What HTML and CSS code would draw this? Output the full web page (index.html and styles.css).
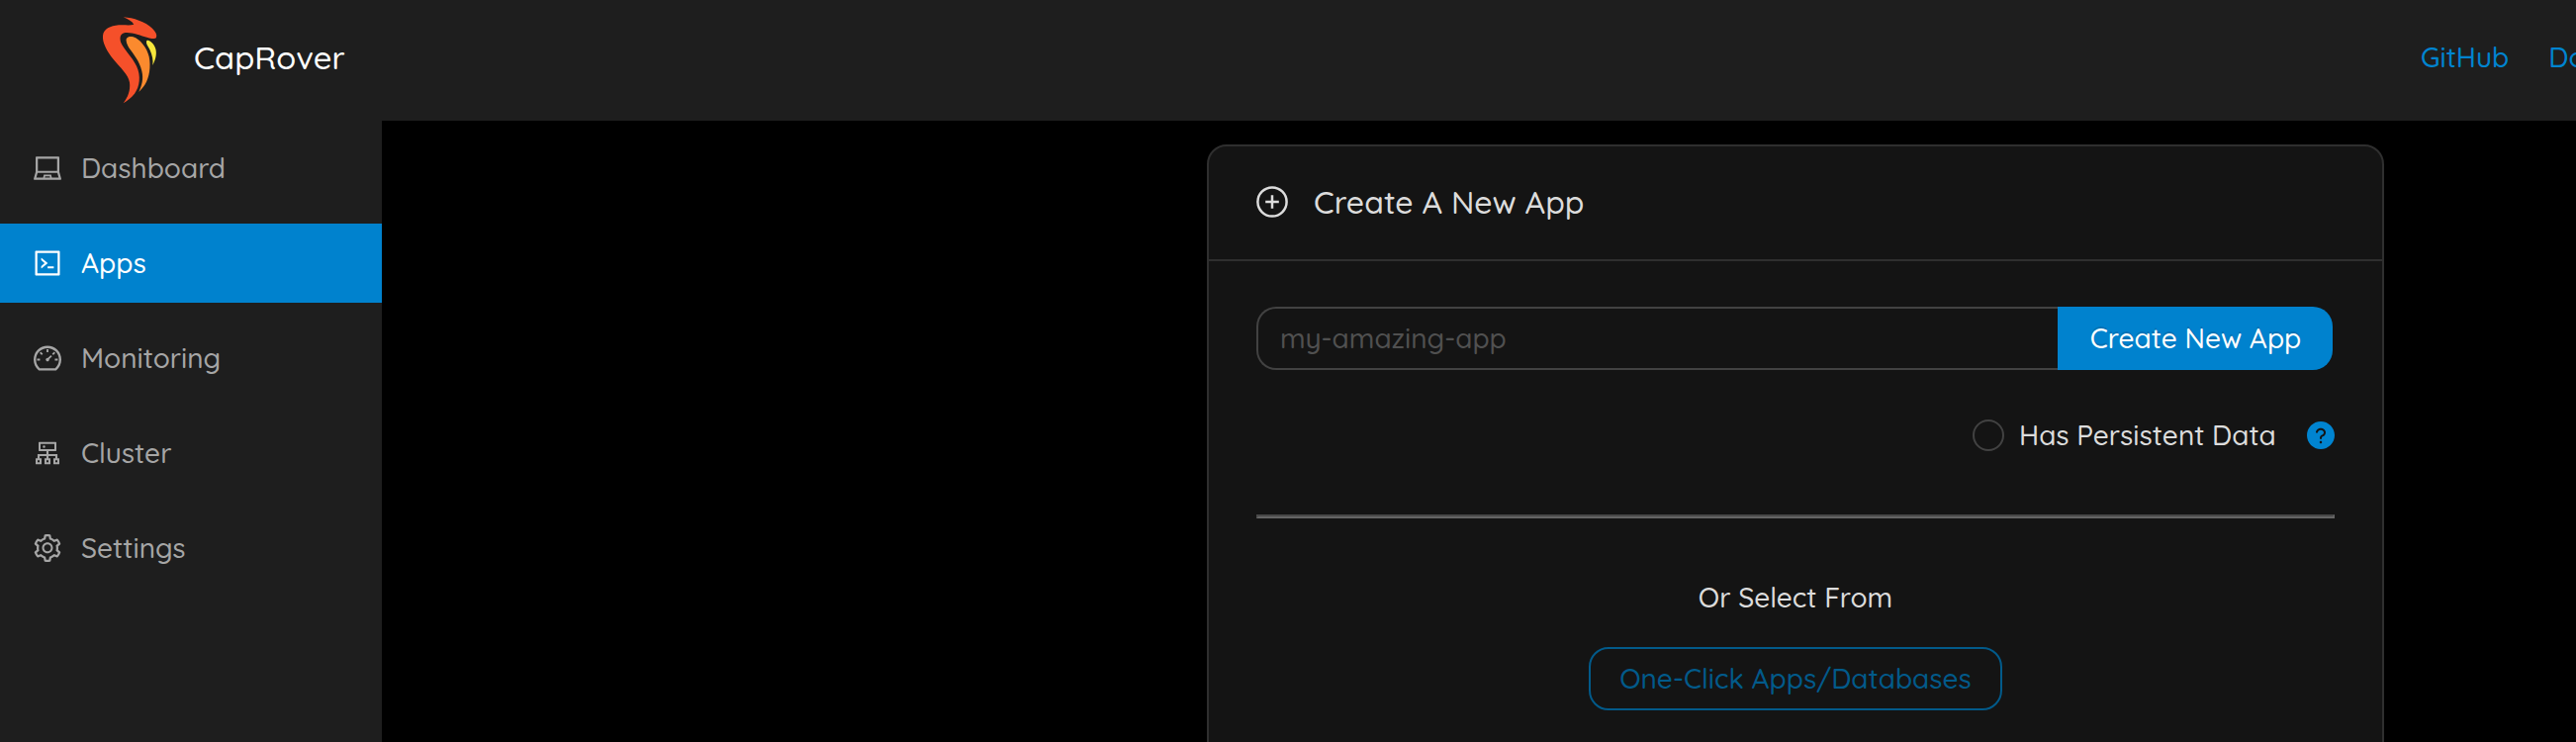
FILE: index.html
```
<!DOCTYPE html>
<html lang="en">
<head>
  <meta charset="UTF-8">
  <meta name="viewport" content="width=device-width, initial-scale=1.0">
  <title>CapRover</title>
  <link rel="stylesheet" href="styles.css">
</head>
<body>
  <header>
    <svg class="logo" viewBox="66 48 174 270">
      <path fill="#f5502a" d="M134 52C165 54 200 66 222 86C232 96 237 105 234 113C231 119 220 118 208 114C185 107 160 97 140 99C124 101 122 114 127 130C134 148 160 172 174 200C188 230 184 262 168 284C158 297 145 306 134 313C148 295 156 275 153 250C149 225 124 205 104 180C84 155 70 130 72 108C74 88 95 78 120 76C140 75 155 78 166 74C160 64 148 58 134 52Z"/>
      <path fill="#fb8a2e" d="M143 124C141 113 152 108 164 112C184 118 206 145 212 172C218 202 213 235 200 256C193 267 186 273 181 279C190 258 196 240 190 215C183 185 165 165 151 145C146 137 144 131 143 124Z"/>
      <path fill="#f6e73c" d="M204 126C205 120 214 122 221 130C233 142 236 158 232 174C230 184 226 191 223 198C225 182 222 168 214 150C209 140 203 134 204 126Z"/>
    </svg>
    <h1>CapRover</h1>
    <nav class="links">
      <a href="#">GitHub</a>
      <a href="#">Docs</a>
    </nav>
  </header>

  <div class="layout">
    <aside>
      <ul class="menu">
        <li>
          <svg class="icon" viewBox="0 0 1024 1024"><path d="M956.9 845.1L896.4 632V168c0-17.7-14.3-32-32-32h-704c-17.7 0-32 14.3-32 32v464L67.9 845.1C60.4 866 75.8 888 98 888h828.8c22.2 0 37.6-22 30.1-42.9zM200.4 208h624v395h-624V208zm228.3 608l8.1-37h150.3l8.1 37H428.7zm224 0l-19.1-86.7c-.8-3.7-4.1-6.3-7.8-6.3H398.2c-3.8 0-7 2.6-7.8 6.3L371.3 816H151l42.3-149h638.2l42.3 149H652.7z"/></svg>
          <span>Dashboard</span>
        </li>
        <li class="active">
          <svg class="icon" viewBox="0 0 1024 1024"><path d="M516 673c0 4.4 3.4 8 7.5 8h185c4.1 0 7.5-3.6 7.5-8v-48c0-4.4-3.4-8-7.5-8h-185c-4.1 0-7.5 3.6-7.5 8v48zm-194.9 6.1l192-161c3.8-3.2 3.8-9.1 0-12.3l-192-160.9A7.95 7.95 0 00308 351v62.7c0 2.4 1 4.6 2.9 6.1L420.7 512l-109.8 92.2a8.1 8.1 0 00-2.9 6.1V673c0 6.8 7.9 10.5 13.1 6.1zM880 112H144c-17.7 0-32 14.3-32 32v736c0 17.7 14.3 32 32 32h736c17.7 0 32-14.3 32-32V144c0-17.7-14.3-32-32-32zm-40 728H184V184h656v656z"/></svg>
          <span>Apps</span>
        </li>
        <li>
          <svg class="icon" viewBox="0 0 1024 1024"><path d="M924.8 385.6a446.7 446.7 0 00-96-142.4 446.7 446.7 0 00-142.4-96C631.1 123.8 572.5 112 512 112s-119.1 11.8-174.4 35.2a446.7 446.7 0 00-142.4 96 446.7 446.7 0 00-96 142.4C75.8 440.9 64 499.5 64 560c0 132.7 58.3 257.7 159.9 343.1l1.7 1.4c5.8 4.8 13.1 7.5 20.6 7.5h531.7c7.5 0 14.8-2.7 20.6-7.5l1.7-1.4C901.7 817.7 960 692.7 960 560c0-60.5-11.9-119.1-35.2-174.4zM761.4 836H262.6A371.12 371.12 0 01140 560c0-99.4 38.7-192.8 109-263 70.3-70.3 163.7-109 263-109 99.4 0 192.8 38.7 263 109 70.3 70.3 109 163.7 109 263 0 105.6-44.5 205.5-122.6 276zM623.5 421.5a8.03 8.03 0 00-11.3 0L527.7 506c-18.7-5-39.4-.2-54.1 14.5a55.95 55.95 0 000 79.2 55.95 55.95 0 0079.2 0 55.87 55.87 0 0014.5-54.1l84.5-84.5c3.1-3.1 3.1-8.2 0-11.3l-28.3-28.3zM490 320h44c4.4 0 8-3.6 8-8v-80c0-4.4-3.6-8-8-8h-44c-4.4 0-8 3.6-8 8v80c0 4.4 3.6 8 8 8zm260 218v44c0 4.4 3.6 8 8 8h80c4.4 0 8-3.6 8-8v-44c0-4.4-3.6-8-8-8h-80c-4.4 0-8 3.6-8 8zm12.7-197.2l-31.1-31.1a8.03 8.03 0 00-11.3 0l-56.6 56.6a8.03 8.03 0 000 11.3l31.1 31.1c3.1 3.1 8.2 3.1 11.3 0l56.6-56.6c3.1-3.1 3.1-8.2 0-11.3zm-458.6-31.1a8.03 8.03 0 00-11.3 0l-31.1 31.1a8.03 8.03 0 000 11.3l56.6 56.6c3.1 3.1 8.2 3.1 11.3 0l31.1-31.1c3.1-3.1 3.1-8.2 0-11.3l-56.6-56.6zM262 530h-80c-4.4 0-8 3.6-8 8v44c0 4.4 3.6 8 8 8h80c4.4 0 8-3.6 8-8v-44c0-4.4-3.6-8-8-8z"/></svg>
          <span>Monitoring</span>
        </li>
        <li>
          <svg class="icon" viewBox="0 0 1024 1024"><path d="M888 680h-54V540H546v-92h238c8.8 0 16-7.2 16-16V168c0-8.8-7.2-16-16-16H240c-8.8 0-16 7.2-16 16v264c0 8.8 7.2 16 16 16h238v92H190v140h-54c-4.4 0-8 3.6-8 8v176c0 4.4 3.6 8 8 8h176c4.4 0 8-3.6 8-8V688c0-4.4-3.6-8-8-8h-54v-72h220v72h-54c-4.4 0-8 3.6-8 8v176c0 4.4 3.6 8 8 8h176c4.4 0 8-3.6 8-8V688c0-4.4-3.6-8-8-8h-54v-72h220v72h-54c-4.4 0-8 3.6-8 8v176c0 4.4 3.6 8 8 8h176c4.4 0 8-3.6 8-8V688c0-4.4-3.6-8-8-8zM256 805.3c0 1.5-1.2 2.7-2.7 2.7h-58.7c-1.5 0-2.7-1.2-2.7-2.7v-58.7c0-1.5 1.2-2.7 2.7-2.7h58.7c1.5 0 2.7 1.2 2.7 2.7v58.7zm288 0c0 1.5-1.2 2.7-2.7 2.7h-58.7c-1.5 0-2.7-1.2-2.7-2.7v-58.7c0-1.5 1.2-2.7 2.7-2.7h58.7c1.5 0 2.7 1.2 2.7 2.7v58.7zM288 384V216h448v168H288zm544 421.3c0 1.5-1.2 2.7-2.7 2.7h-58.7c-1.5 0-2.7-1.2-2.7-2.7v-58.7c0-1.5 1.2-2.7 2.7-2.7h58.7c1.5 0 2.7 1.2 2.7 2.7v58.7zM360 300a40 40 0 1080 0 40 40 0 10-80 0z"/></svg>
          <span>Cluster</span>
        </li>
        <li>
          <svg class="icon" viewBox="0 0 1024 1024"><path d="M924.8 625.7l-65.5-56c3.1-19 4.7-38.4 4.7-57.8s-1.6-38.8-4.7-57.8l65.5-56a32.03 32.03 0 009.3-35.2l-.9-2.6a443.74 443.74 0 00-79.7-137.9l-1.8-2.1a32.12 32.12 0 00-35.1-9.5l-81.3 28.9c-30-24.6-63.5-44-99.7-57.6l-15.7-85a32.05 32.05 0 00-25.8-25.7l-2.7-.5c-52.1-9.4-106.9-9.4-159 0l-2.7.5a32.05 32.05 0 00-25.8 25.7l-15.8 85.4a351.86 351.86 0 00-99 57.4l-81.9-29.1a32 32 0 00-35.1 9.5l-1.8 2.1a446.02 446.02 0 00-79.7 137.9l-.9 2.6c-4.5 12.5-.8 26.5 9.3 35.2l66.3 56.6c-3.1 18.8-4.6 38-4.6 57.1 0 19.2 1.5 38.4 4.6 57.1L99 625.5a32.03 32.03 0 00-9.3 35.2l.9 2.6c18.1 50.4 44.9 96.9 79.7 137.9l1.8 2.1a32.12 32.12 0 0035.1 9.5l81.9-29.1c29.8 24.5 63.1 43.9 99 57.4l15.8 85.4a32.05 32.05 0 0025.8 25.7l2.7.5a449.4 449.4 0 00159 0l2.7-.5a32.05 32.05 0 0025.8-25.7l15.7-85a350 350 0 0099.7-57.6l81.3 28.9a32 32 0 0035.1-9.5l1.8-2.1c34.8-41.1 61.6-87.5 79.7-137.9l.9-2.6c4.5-12.3.8-26.3-9.3-35zM788.3 465.9c2.5 15.1 3.8 30.6 3.8 46.1s-1.3 31-3.8 46.1l-6.6 40.1 74.7 63.9a370.03 370.03 0 01-42.6 73.6L721 702.8l-31.4 25.8c-23.9 19.6-50.5 35-79.3 45.8l-38.1 14.3-17.9 97a377.5 377.5 0 01-85 0l-17.9-97.2-37.8-14.5c-28.5-10.8-55-26.2-78.7-45.7l-31.4-25.9-93.4 33.2c-17-22.9-31.2-47.6-42.6-73.6l75.5-64.5-6.5-40c-2.4-14.9-3.7-30.3-3.7-45.5 0-15.3 1.2-30.6 3.7-45.5l6.5-40-75.5-64.5c11.3-26.1 25.6-50.7 42.6-73.6l93.4 33.2 31.4-25.9c23.7-19.5 50.2-34.9 78.7-45.7l37.9-14.3 17.9-97.2c28.1-3.2 56.8-3.2 85 0l17.9 97 38.1 14.3c28.7 10.8 55.4 26.2 79.3 45.8l31.4 25.8 92.8-32.9c17 22.9 31.2 47.6 42.6 73.6L781.8 426l6.5 39.9zM512 326c-97.2 0-176 78.8-176 176s78.8 176 176 176 176-78.8 176-176-78.8-176-176-176zm79.2 255.2A111.6 111.6 0 01512 614c-29.9 0-58-11.7-79.2-32.8A111.6 111.6 0 01400 502c0-29.9 11.7-58 32.8-79.2C454 401.6 482.1 390 512 390c29.9 0 58 11.6 79.2 32.8A111.6 111.6 0 01624 502c0 29.9-11.7 58-32.8 79.2z"/></svg>
          <span>Settings</span>
        </li>
      </ul>
    </aside>

    <main>
      <section class="card">
        <div class="card-head">
          <svg class="plus" viewBox="0 0 36 36"><circle cx="18" cy="18" r="14.6"/><path d="M18 11.2v13.6M11.2 18h13.6"/></svg>
          <h2>Create A New App</h2>
        </div>
        <div class="card-body">
          <form class="create">
            <input type="text" placeholder="my-amazing-app" aria-label="App name">
            <button type="button">Create New App</button>
          </form>
          <div class="persistent">
            <span class="check"></span>
            <span class="check-label">Has Persistent Data</span>
            <svg class="icon help" viewBox="0 0 1024 1024"><path d="M512 64C264.6 64 64 264.6 64 512s200.6 448 448 448 448-200.6 448-448S759.4 64 512 64zm0 708c-22.1 0-40-17.9-40-40s17.9-40 40-40 40 17.9 40 40-17.9 40-40 40zm62.9-219.5a48.3 48.3 0 00-30.9 44.8V620c0 4.4-3.6 8-8 8h-48c-4.4 0-8-3.6-8-8v-21.5c0-23.1 6.7-45.9 19.9-64.9 12.9-18.6 30.9-32.8 52.1-40.9 34-13.1 56-41.6 56-72.7 0-44.1-43.1-80-96-80s-96 35.9-96 80v7.6c0 4.4-3.6 8-8 8h-48c-4.4 0-8-3.6-8-8V420c0-39.3 17.2-76 48.4-103.3C430.4 290.4 470 276 512 276s81.6 14.5 111.6 40.7C654.8 344 672 380.7 672 420c0 57.8-38.1 109.8-97.1 132.5z"/></svg>
          </div>
          <hr>
          <p class="or">Or Select From</p>
          <a class="one-click" href="#">One-Click Apps/Databases</a>
        </div>
      </section>
    </main>
  </div>
</body>
</html>
```
FILE: styles.css
```
* {
  box-sizing: border-box;
}

body {
  margin: 0;
  height: 750px;
  overflow: hidden;
  background: #000;
  color: #dcdcdc;
  font-family: Quicksand, Lato, sans-serif;
  font-size: 28px;
  font-weight: 500;
  line-height: 44px;
  white-space: nowrap;
}

a {
  color: #0084d0;
  text-decoration: none;
}

/* Header */
header {
  display: flex;
  align-items: center;
  height: 122px;
  padding-left: 102px;
  background: #1e1e1e;
}

.logo {
  width: 58px;
  height: 90px;
}

header h1 {
  margin: 0 0 6px 36px;
  color: #fff;
  font-size: 1.17em;
  font-weight: 500;
}

.links {
  display: flex;
  gap: 40px;
  width: 157px;
  margin: 0 0 6px auto;
  overflow: hidden;
}

/* Sidebar */
.layout {
  display: flex;
  height: 628px;
}

aside {
  width: 386px;
  background: #1e1e1e;
}

.menu {
  display: flex;
  flex-direction: column;
  gap: 16px;
  margin: 0;
  padding: 8px 0 0;
  list-style: none;
}

.menu li {
  display: flex;
  align-items: center;
  gap: 18px;
  height: 80px;
  padding-left: 32px;
  color: #a6a6a6;
}

.menu .active {
  background: #0082ce;
  color: #fff;
}

.icon {
  width: 32px;
  height: 32px;
  fill: currentColor;
}

/* Create app card */
main {
  flex: 1;
  padding: 24px 0 0 834px;
  overflow: hidden;
}

.card {
  width: 1190px;
  height: 700px;
  border: 2px solid #2f2f2f;
  border-radius: 20px;
  background: #141414;
}

.card-head {
  display: flex;
  align-items: center;
  gap: 24px;
  height: 116px;
  padding: 0 46px 2px;
  border-bottom: 2px solid #2f2f2f;
}

.card-head h2 {
  margin: 0;
  font-size: 32px;
  font-weight: 500;
}

.plus {
  width: 36px;
  height: 36px;
  fill: none;
  stroke: currentColor;
  stroke-width: 2.5;
}

.card-body {
  display: flex;
  flex-direction: column;
  padding: 46px 48px;
}

.create {
  display: flex;
  width: 1088px;
  height: 64px;
}

.create input {
  flex: 1;
  padding: 0 22px;
  border: 2px solid #424242;
  border-right: 0;
  border-radius: 20px 0 0 20px;
  background: transparent;
  color: #dcdcdc;
  font: inherit;
}

.create input::placeholder {
  color: #505050;
  opacity: 1;
}

.create button {
  width: 278px;
  padding: 0 0 0 1px;
  border: 0;
  border-radius: 0 20px 20px 0;
  background: #0082ce;
  color: #fff;
  font: inherit;
  text-shadow: 0 -2px 0 rgba(0, 0, 0, 0.12);
}

.persistent {
  display: flex;
  align-items: center;
  justify-content: flex-end;
  height: 44px;
  margin: 44px -2px 0 0;
}

.check {
  width: 32px;
  height: 32px;
  border: 2px solid #424242;
  border-radius: 50%;
}

.check-label {
  width: 289px;
  margin-left: 15px;
}

.help {
  color: #0084d0;
}

hr {
  width: 100%;
  height: 4px;
  margin: 58px 0;
  border: 2px solid;
  border-color: #484848 #646464 #646464 #484848;
}

.or {
  margin: 0 0 28px;
  text-align: center;
}

.one-click {
  align-self: center;
  width: 418px;
  height: 64px;
  border: 2px solid #025a8a;
  border-radius: 20px;
  color: #025a8a;
  line-height: 60px;
  text-align: center;
}
```
